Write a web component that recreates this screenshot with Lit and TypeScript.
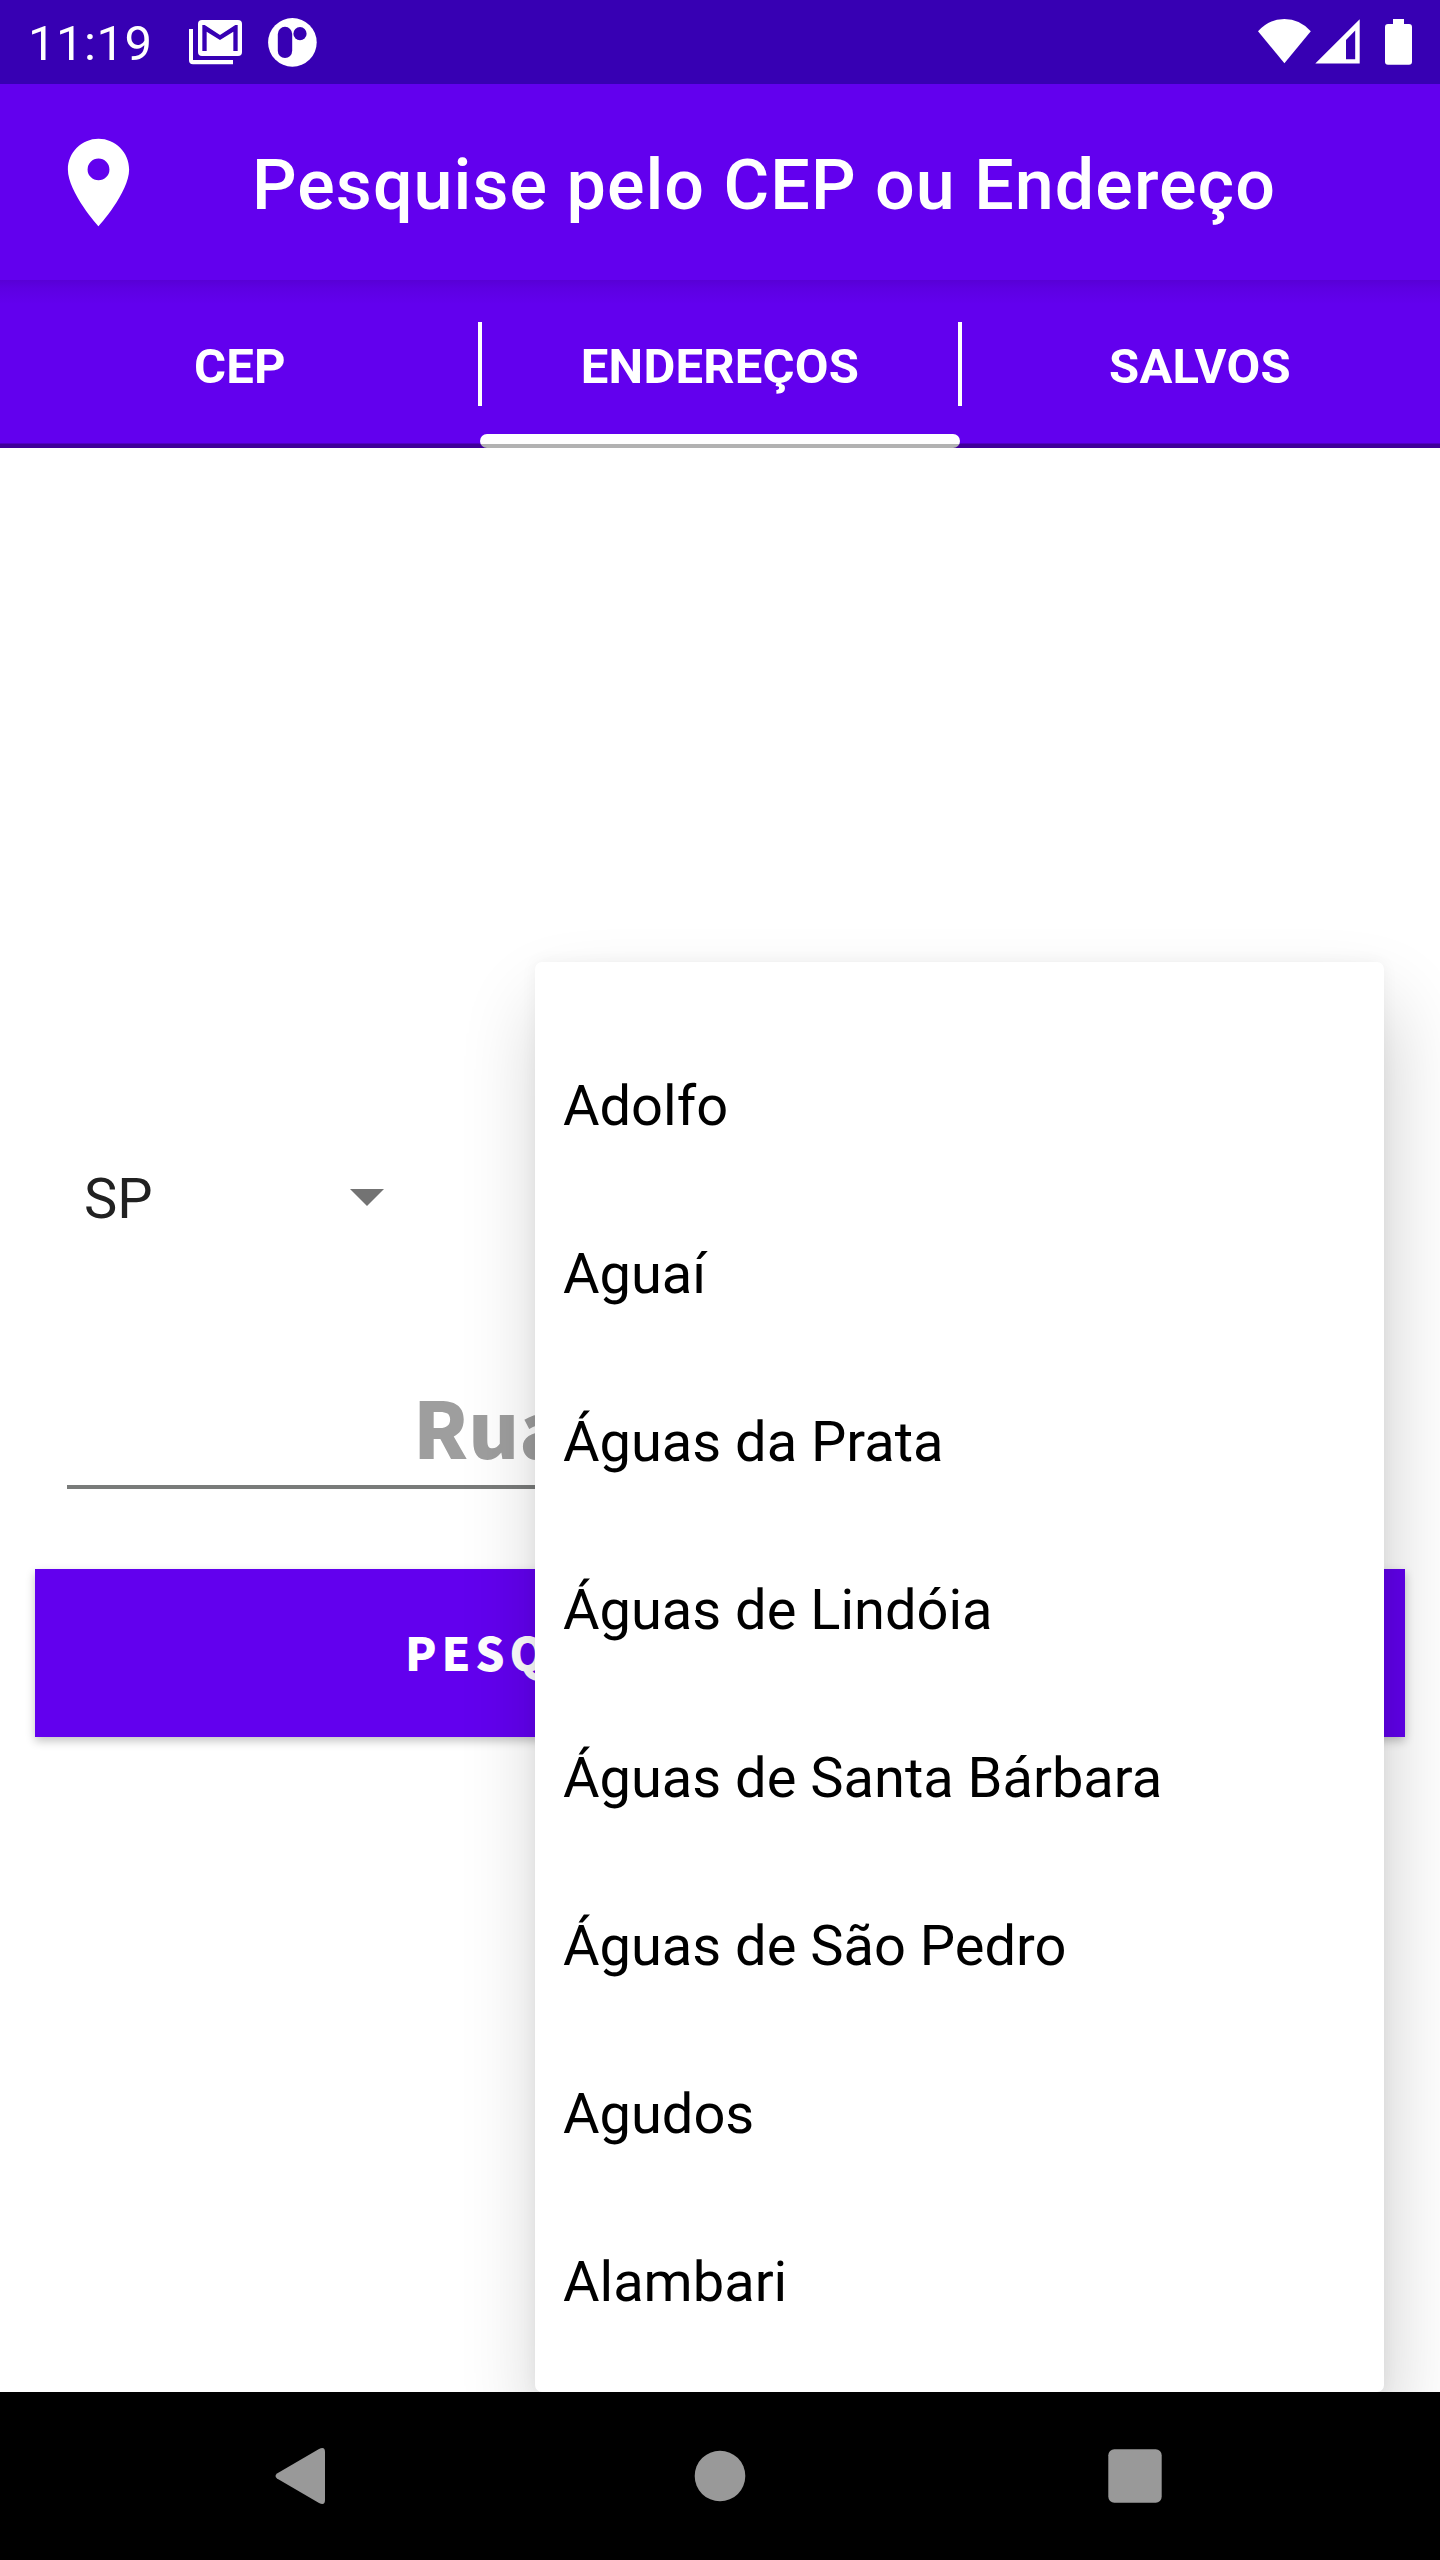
import { LitElement, html, css } from "lit";
import { customElement, state } from "lit/decorators.js";
import { classMap } from "lit/directives/class-map.js";

@customElement("status-bar")
class StatusBar extends LitElement {
  static styles = css`
    :host { display: flex; height: 84px; box-sizing: border-box; padding: 0 28px; background: #3700b3; color: #fff; }
    .time { width: 158px; font-size: 49px; line-height: 87px; letter-spacing: 0.5px; white-space: nowrap; }
    .round { margin-left: 21px; }
    .wifi { margin-left: auto; }
    .signal { margin-left: 3px; }
    .battery { margin-left: 25px; }
    svg { display: block; flex: none; fill: #fff; }
    .hole { fill: #3700b3; }
  `;
  render() {
    return html`
      <div class="time">11:19</div>
      <svg width="60" height="84" viewBox="558 0 180 252">
        <path d="M567 87h12v93h120v13H579q-12 0-12-12z" />
        <rect x="594" y="60" width="132" height="108" rx="12" />
        <path class="hole" d="M607 153V75h7l46 30 46-30h7v78h-13V95l-40 25-40-25v58z" />
      </svg>
      <svg class="round" width="51" height="84" viewBox="267 0 51 84">
        <circle cx="292.4" cy="42.4" r="24.3" />
        <rect class="hole" x="277.8" y="26.8" width="14.4" height="31.2" rx="7.2" />
        <circle class="hole" cx="300" cy="33.7" r="6.6" />
      </svg>
      <svg class="wifi" width="55" height="84" viewBox="1257 0 55 84">
        <path d="M1258 31.3Q1269 19 1284.4 19T1310.8 31.3L1284.4 63.2z" />
      </svg>
      <svg class="signal" width="45" height="84" viewBox="1315 0 45 84">
        <path fill-rule="evenodd" d="M1315.3 63.6 1359.7 19.3V63.6zM1346 39.9V59.2H1355.2V30.6z" />
      </svg>
      <svg class="battery" width="27" height="84" viewBox="1385 0 27 84">
        <path d="M1393 24V19H1404V24H1409Q1412 24 1412 27V61.7Q1412 64.7 1409 64.7H1388Q1385 64.7 1385 61.7V27Q1385 24 1388 24z" />
      </svg>
    `;
  }
}

@customElement("city-menu")
class CityMenu extends LitElement {
  static styles = css`
    :host { display: block; box-sizing: border-box; padding-top: 60px; background: #fff; border-radius: 7px; }
    .item { height: 168px; line-height: 168px; padding-left: 28px; font-size: 56px; color: #000; white-space: nowrap; }
  `;
  private cities = [
    "Adolfo", "Aguaí", "Águas da Prata", "Águas de Lindóia",
    "Águas de Santa Bárbara", "Águas de São Pedro", "Agudos", "Alambari",
  ];
  render() {
    return this.cities.map((c) => html`<div class="item">${c}</div>`);
  }
}

@customElement("app-root")
class AppRoot extends LitElement {
  static styles = css`
    :host { display: flex; flex-direction: column; width: 1440px; height: 2560px; overflow: hidden; background: #fff; font-family: Roboto, sans-serif; }
    .toolbar { display: flex; align-items: center; height: 196px; box-sizing: border-box; padding-left: 46px; background: #6200ee; color: #fff; }
    .pin { width: 105px; height: 105px; fill: #fff; }
    .title { margin-left: 101px; font-size: 70px; font-weight: 500; letter-spacing: 1.05px; line-height: 82px; padding-top: 6px; white-space: nowrap; }
    .tabs { display: grid; grid-template-columns: repeat(3, 1fr); height: 168px; position: relative;
      background: linear-gradient(#5800d5, #5d00e2 8px, #6200ee 24px, #6200ee 163px, #3f0099 164px, #3f0099); }
    .tab { display: flex; flex-direction: column; align-items: center; color: #fff; font-size: 49px; font-weight: 700; letter-spacing: 0.2px; }
    .label { height: 154px; line-height: 173px; }
    .bar { width: 100%; height: 14px; border-radius: 7px; }
    .active .bar { background: linear-gradient(#fff 10px, #b2b2b2 10px); }
    .rule { position: absolute; top: 42px; width: 4px; height: 84px; background: #fff; }
    .first { left: 478px; }
    .second { left: 958px; }
    .content { position: relative; flex: 1; overflow: hidden; display: flex; flex-direction: column; padding: 667px 35px 0; }
    .spinner { display: flex; align-items: center; height: 168px; padding-left: 49px; font-size: 56px; color: #212121; }
    .value { width: 266px; }
    .arrow { width: 34px; height: 17px; fill: #737373; margin-bottom: 3px; }
    .field { display: flex; align-items: flex-end; height: 202px; margin: 0 32px; border-bottom: 4px solid #797b7a; box-sizing: content-box; }
    .hint { margin-left: 346px; height: 120px; font: 900 78px/120px "Noto Sans CJK JP", sans-serif; color: #9e9e9e; }
    .button { display: flex; align-items: center; height: 168px; margin-top: 80px; background: #6200ee; box-shadow: 0 4px 9px rgba(0,0,0,.24); color: #fff; }
    .caption { margin-left: 370px; padding-bottom: 5px; font: 900 46px/68px "Noto Sans CJK JP", sans-serif; letter-spacing: 4.8px; }
    .menu { position: absolute; left: 535px; top: 514px; width: 849px; height: 1430px;
      box-shadow: 6px 44px 80px rgba(0,0,0,.19), 0 0 16px rgba(0,0,0,.05); }
    .nav { display: flex; justify-content: space-between; align-items: center; height: 168px; box-sizing: border-box; padding: 0 278px 0 275px; background: #000; }
    .nav svg { width: 54px; height: 58px; fill: #999; display: block; }
  `;
  @state() private active = 1;
  private tabs = ["CEP", "ENDEREÇOS", "SALVOS"];
  render() {
    return html`
      <status-bar></status-bar>
      <header class="toolbar">
        <svg class="pin" viewBox="0 0 24 24"><path d="M12 2C8.13 2 5 5.13 5 9c0 5.25 7 13 7 13s7-7.75 7-13c0-3.87-3.13-7-7-7zm0 9.5a2.5 2.5 0 0 1 0-5 2.5 2.5 0 0 1 0 5z" /></svg>
        <div class="title">Pesquise pelo CEP ou Endereço</div>
      </header>
      <nav class="tabs">
        ${this.tabs.map((t, i) => html`
          <div class=${classMap({ tab: true, active: i === this.active })} @click=${() => (this.active = i)}>
            <div class="label">${t}</div><div class="bar"></div>
          </div>`)}
        <div class="rule first"></div>
        <div class="rule second"></div>
      </nav>
      <main class="content">
        <div class="spinner">
          <div class="value">SP</div>
          <svg class="arrow" viewBox="0 0 34 17"><path d="M0 0h34L17 17z" /></svg>
        </div>
        <div class="field"><div class="hint">Rua</div></div>
        <div class="button"><span class="caption">PESQ</span></div>
        <city-menu class="menu"></city-menu>
      </main>
      <footer class="nav">
        <svg viewBox="0 0 54 58"><path d="M2 26.5 44 2Q50 -1 50 5V53Q50 59 44 56L2 31.5Q-1 29 2 26.5z" /></svg>
        <svg viewBox="0 0 54 58"><circle cx="28" cy="29" r="25.3" /></svg>
        <svg viewBox="0 0 54 58"><rect x="0.3" y="2.3" width="53.4" height="53.4" rx="6" /></svg>
      </footer>
    `;
  }
}
